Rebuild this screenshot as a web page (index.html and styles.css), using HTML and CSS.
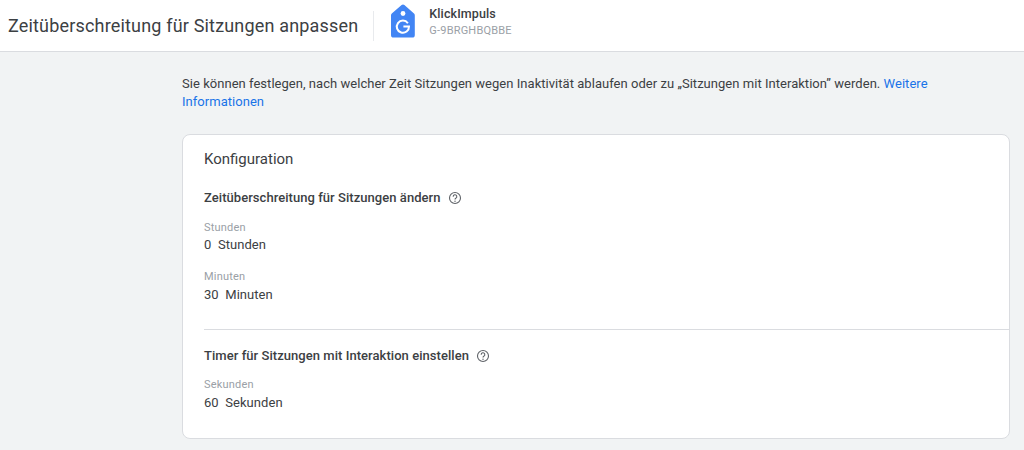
FILE: index.html
```html
<!DOCTYPE html>
<html lang="de">
<head>
<meta charset="utf-8">
<title>Zeitüberschreitung für Sitzungen anpassen</title>
<link rel="stylesheet" href="styles.css">
</head>
<body>
<header class="topbar">
  <h1 class="page-title">Zeitüberschreitung für Sitzungen anpassen</h1>
  <div class="divider"></div>
  <svg class="tag" width="24" height="34" viewBox="0 0 24 34"><path d="M12 0.5 a2 2 0 0 1 1.4 .6 L23 9.6 a2.6 2.6 0 0 1 .8 2 V31 a2.6 2.6 0 0 1 -2.6 2.6 H2.6 A2.6 2.6 0 0 1 0 31 V11.6 a2.6 2.6 0 0 1 .8 -2 L10.6 1.1 a2 2 0 0 1 1.4 -.6z" fill="#4285f4"/><circle cx="12" cy="9.5" r="2.4" fill="#fff"/><path d="M16.9 19.2 A6.1 6.1 0 1 0 18 22.5 H12.4" fill="none" stroke="#fff" stroke-width="2"/></svg>
  <div class="property">
    <div class="property-name">KlickImpuls</div>
    <div class="property-id">G-9BRGHBQBBE</div>
  </div>
</header>
<main class="content">
  <p class="intro">Sie können festlegen, nach welcher Zeit Sitzungen wegen Inaktivität ablaufen oder zu „Sitzungen mit Interaktion” werden. <a class="link" href="#">Weitere Informationen</a></p>
  <section class="card">
    <h2 class="card-title">Konfiguration</h2>
    <div class="section">
      <h3 class="section-title">Zeitüberschreitung für Sitzungen ändern <svg class="help" width="14" height="14" viewBox="0 0 14 14"><circle cx="7" cy="7" r="5.5" fill="none" stroke="#5f6368" stroke-width="1.1"/><path d="M5.2 5.7 A1.8 1.8 0 1 1 7.8 7.2 C7.2 7.6 7 7.9 7 8.6" fill="none" stroke="#5f6368" stroke-width="1.1"/><circle cx="7" cy="10.2" r=".7" fill="#5f6368"/></svg></h3>
      <div class="field field-hours"><div class="field-label">Stunden</div><div class="field-value field-value-tight">0&nbsp; Stunden</div></div>
      <div class="field field-minutes"><div class="field-label">Minuten</div><div class="field-value">30&nbsp; Minuten</div></div>
    </div>
    <div class="section section-ruled">
      <h3 class="section-title">Timer für Sitzungen mit Interaktion einstellen <svg class="help" width="14" height="14" viewBox="0 0 14 14"><circle cx="7" cy="7" r="5.5" fill="none" stroke="#5f6368" stroke-width="1.1"/><path d="M5.2 5.7 A1.8 1.8 0 1 1 7.8 7.2 C7.2 7.6 7 7.9 7 8.6" fill="none" stroke="#5f6368" stroke-width="1.1"/><circle cx="7" cy="10.2" r=".7" fill="#5f6368"/></svg></h3>
      <div class="field"><div class="field-label">Sekunden</div><div class="field-value">60&nbsp; Sekunden</div></div>
    </div>
  </section>
</main>
</body>
</html>
```
FILE: styles.css
```css
* { box-sizing: border-box; }
html, body { margin: 0; height: 100%; }
body {
  background: #f1f3f4;
  font-family: Roboto, "Liberation Sans", sans-serif;
  color: #202124;
  overflow: hidden;
}
.topbar {
  display: flex;
  align-items: center;
  height: 52px;
  background: #fff;
  border-bottom: 1px solid #dadce0;
  padding-left: 8px;
}
.page-title {
  margin: 0;
  font-size: 18px;
  font-weight: 400;
  letter-spacing: .175px;
  color: #3c4043;
}
.divider {
  width: 1px;
  height: 30px;
  background: #e8eaed;
  margin-left: 15px;
}
.tag { margin-left: 17px; margin-bottom: 10px; flex: none; }
.property { margin-left: 14px; margin-top: -7px; }
.property-name { font-size: 12.5px; font-weight: 500; line-height: 16px; letter-spacing: .1px; color: #3c4043; }
.property-id { font-size: 11px; line-height: 14px; margin-top: 2px; color: #9aa0a6; letter-spacing: .2px; }
.content { padding: 23px 14px 0 182px; }
.intro { margin: 0; font-size: 13px; line-height: 18px; color: #3c4043; letter-spacing: .035px; }
.link { color: #1a73e8; text-decoration: none; }
.card {
  margin-top: 23px;
  height: 305px;
  background: #fff;
  border: 1px solid #dadce0;
  border-radius: 8px;
  padding: 14px 0 0 21px;
}
.card-title { margin: 0; font-size: 15px; font-weight: 400; line-height: 20px; color: #3c4043; }
.section { margin-top: 20px; }
.section-ruled { border-top: 1px solid #dadce0; margin-top: 24px; padding-top: 17px; }
.section-title {
  display: flex;
  align-items: center;
  gap: 7px;
  margin: 0;
  font-size: 13px;
  font-weight: 500;
  line-height: 18px;
  letter-spacing: .05px;
  color: #3c4043;
}
.field { margin-top: 13px; }
.field-hours { margin-top: 14px; }
.field-minutes { margin-top: 15px; }
.field-label { font-size: 11px; line-height: 14px; color: #9aa0a6; letter-spacing: .2px; }
.field-value { font-size: 13px; line-height: 20px; margin-top: 1px; letter-spacing: .05px; color: #3c4043; }
.field-value-tight { margin-top: 0; }
```
